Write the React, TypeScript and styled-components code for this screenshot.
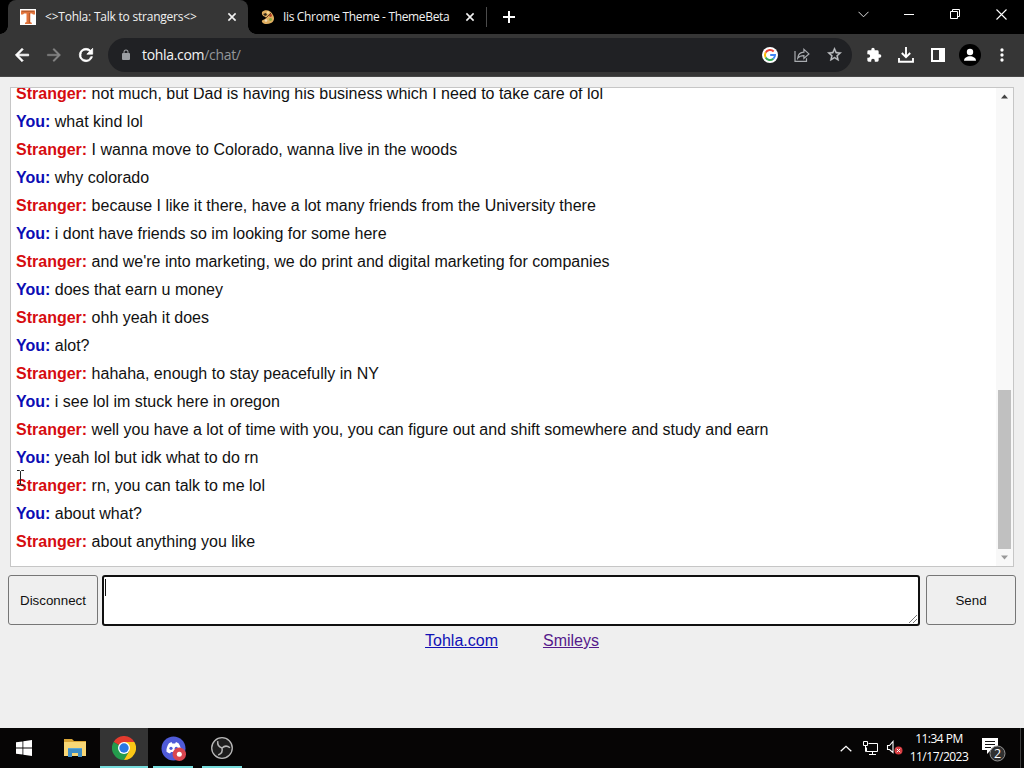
import React from "react";
import styled, { createGlobalStyle } from "styled-components";

const GlobalStyle = createGlobalStyle`
  * { box-sizing: border-box; }
  html, body { margin: 0; padding: 0; overflow: hidden; }
  body { font-family: "Liberation Sans", Arial, sans-serif; }
  svg { display: block; flex: none; }
`;

const uiFont = `"Open Sans", "Noto Sans", sans-serif`;

const Desktop = styled.div`
  position: relative;
  width: 1024px;
  height: 768px;
  display: flex;
  flex-direction: column;
  background: #efefef;
  overflow: hidden;
`;

const TabStrip = styled.header`
  display: flex;
  height: 34px;
  flex: none;
  padding-left: 8px;
  background: #000;
  color: #fff;
`;

const Tab = styled.div<{ $active?: boolean }>`
  position: relative;
  display: flex;
  align-items: center;
  width: ${(p) => (p.$active ? 240 : 238)}px;
  height: 34px;
  padding-left: 12px;
  border-radius: 8px 8px 0 0;
  background: ${(p) => (p.$active ? "#363636" : "transparent")};
  &::before, &::after {
    content: "";
    display: ${(p) => (p.$active ? "block" : "none")};
    position: absolute;
    bottom: 0;
    width: 8px;
    height: 8px;
  }
  &::before { left: -8px; background: radial-gradient(circle at 0 0, transparent 7.5px, #363636 8px); }
  &::after { right: -8px; background: radial-gradient(circle at 100% 0, transparent 7.5px, #363636 8px); }
`;

const TabTitle = styled.span<{ $gap: number; $spacing: number }>`
  flex: 1;
  margin-left: ${(p) => p.$gap}px;
  font: 12px/16px ${uiFont};
  letter-spacing: ${(p) => p.$spacing}px;
  white-space: nowrap;
  color: #f1f1f1;
`;

const TabClose = styled.span`
  display: flex;
  justify-content: center;
  width: 16px;
  margin-right: 8px;
`;

const TabDivider = styled.span`
  width: 1px;
  height: 20px;
  margin-top: 7px;
  background: #4b4b4b;
`;

const NewTab = styled.span`
  display: flex;
  align-items: center;
  justify-content: center;
  width: 28px;
  height: 34px;
  margin-left: 8px;
`;

const WindowControls = styled.div`
  display: flex;
  height: 28px;
  margin-left: auto;
`;

const WindowButton = styled.span`
  display: flex;
  align-items: center;
  justify-content: center;
  width: 46px;
`;

const Toolbar = styled.nav`
  display: flex;
  align-items: center;
  flex: none;
  height: 43px;
  padding: 0 6px 1px;
  background: #363636;
  border-bottom: 1px solid #474747;
`;

const ToolCell = styled.span`
  display: flex;
  align-items: center;
  justify-content: center;
  width: 32px;
  height: 32px;
  flex: none;
`;

const AddressBar = styled.div`
  display: flex;
  align-items: center;
  flex: 1;
  height: 34px;
  margin: 0 6px;
  padding: 0 2px 0 12px;
  border-radius: 17px;
  background: #202124;
`;

const Url = styled.span`
  flex: 1;
  margin-left: 10px;
  font: 14px/20px ${uiFont};
  letter-spacing: -0.32px;
  color: #f4f4f4;
`;

const UrlPath = styled.span`
  color: #93969a;
`;

const Page = styled.main`
  display: flex;
  flex-direction: column;
  flex: 1;
  min-height: 0;
  padding-top: 10px;
  background: #efefef;
`;

const ChatLog = styled.section`
  display: flex;
  height: 480px;
  flex: none;
  margin: 0 10px;
  border: 1px solid #c6c6c6;
  background: #fff;
  overflow: hidden;
`;

const Messages = styled.div`
  flex: 1;
  margin-top: -8px;
  padding-left: 5px;
`;

const Message = styled.p`
  margin: 0;
  height: 28px;
  font-size: 16px;
  line-height: 28px;
  color: #111;
  white-space: nowrap;
`;

const Speaker = styled.b<{ $you: boolean }>`
  color: ${(p) => (p.$you ? "#0c0cb4" : "#d60c10")};
`;

const Scrollbar = styled.div`
  display: flex;
  flex-direction: column;
  justify-content: space-between;
  align-items: center;
  width: 17px;
  padding: 6px 0 6px;
  background: #f8f8f8;
`;

const Thumb = styled.div`
  width: 13px;
  height: 159px;
  margin-top: auto;
  margin-bottom: 6px;
  background: #c0c0c0;
`;

const Composer = styled.form`
  display: flex;
  align-items: flex-start;
  height: 51px;
  margin: 8px 8px 0;
`;

const ChatButton = styled.button`
  width: 90px;
  height: 50px;
  padding: 0;
  border: 1px solid #767676;
  border-radius: 3px;
  background: #efefef;
  color: #101010;
  font: 13.333px "Liberation Sans", Arial, sans-serif;
`;

const MessageInput = styled.div`
  display: flex;
  align-items: flex-start;
  justify-content: space-between;
  flex: 1;
  height: 51px;
  margin: 0 6px 0 4px;
  border: 2px solid #101010;
  border-radius: 3px;
  background: #fff;
`;

const Caret = styled.span`
  width: 1px;
  height: 17px;
  margin: 2px 0 0 1px;
  background: #111;
`;

const ResizeGrip = styled.svg`
  align-self: flex-end;
`;

const FooterLinks = styled.footer`
  display: flex;
  justify-content: center;
  gap: 45px;
  margin-top: 5px;
  font-size: 16px;
  line-height: 20px;
`;

const FooterLink = styled.a<{ $visited?: boolean }>`
  color: ${(p) => (p.$visited ? "#551a8b" : "#1111b5")};
  text-decoration: underline;
`;

const Taskbar = styled.footer`
  display: flex;
  flex: none;
  height: 40px;
  background: #060505;
  color: #fff;
`;

const TaskItem = styled.span<{ $active?: boolean; $line?: number; $first?: boolean }>`
  display: flex;
  flex-direction: column;
  align-items: center;
  justify-content: center;
  width: 48px;
  height: 40px;
  margin-right: ${(p) => (p.$first ? 3 : 1)}px;
  background: linear-gradient(#76dcdc, #76dcdc) bottom center / ${(p) => p.$line || 0}px 2px no-repeat,
    ${(p) => (p.$active ? "#343434" : "transparent")};
`;

const Tray = styled.div`
  display: flex;
  align-items: center;
  margin-left: auto;
`;

const TrayCell = styled.span`
  display: flex;
  align-items: center;
  justify-content: center;
  width: 24px;
`;

const Clock = styled.div`
  width: 66px;
  text-align: center;
  font: 12px/18px ${uiFont};
  letter-spacing: -0.5px;
  white-space: nowrap;
`;

const Notifications = styled.span`
  width: 24px;
  margin: 3px 0 0 10px;
`;

const ShowDesktop = styled.span`
  width: 4px;
  height: 40px;
  margin-left: 14px;
  border-left: 1px solid #3d3d3d;
`;

const Pointer = styled.svg`
  position: absolute;
  left: 16px;
  top: 469px;
`;

const CloseIcon = () => (
  <svg width="10" height="10" viewBox="0 0 10 10" stroke="#f1f1f1" strokeWidth="1.6">
    <path d="M1.4 1.4 8.6 8.6M8.6 1.4 1.4 8.6" />
  </svg>
);

const MaterialIcon = ({ d, color = "#fff", size = 20, bold = 0 }: { d: string; color?: string; size?: number; bold?: number }) => (
  <svg width={size} height={size} viewBox="0 0 24 24" fill={color} stroke={color} strokeWidth={bold}>
    <path d={d} />
  </svg>
);

const TohlaIcon = () => (
  <svg width="16" height="16" viewBox="0 0 16 16">
    <rect width="16" height="16" fill="#fff" />
    <path d="M1 1.5h14v4h-2L12 4.5H10.3v8.5l1.5.7V15H5v-1.3l1.5-.7V4.5H4L3 5.5H1z" fill="#e2743c" />
    <path d="M2 2.3h12M9.4 4v10" stroke="#a9552a" strokeWidth=".9" />
  </svg>
);

const PaletteIcon = () => (
  <svg width="16" height="16" viewBox="0 0 16 16">
    <path d="M2 3C5 0 11 1 13 6c2 3 1 7-2 8-4 2-8 1-9-1-1-3 4-2 4-4S1 8 2 3z" fill="#dfae60" />
    <path d="m3 5 3-1 1 2-2 1" fill="#2d2419" />
    <circle cx="8" cy="3.5" r="1.3" fill="#f6d798" />
    <circle cx="10.5" cy="6.5" r="1.4" fill="#b64227" />
    <circle cx="10.5" cy="10.5" r="1.4" fill="#86aa3c" />
    <circle cx="6" cy="11.5" r="1.3" fill="#f3e1ba" />
    <path d="m5 10 6-6" stroke="#654025" />
  </svg>
);

const GoogleIcon = () => (
  <svg width="16" height="16" viewBox="0 0 16 16">
    <circle cx="8" cy="8" r="8" fill="#fff" />
    <g fill="none" strokeWidth="2">
      <path d="M11.7 4.5A5 5 0 0 0 3.6 5.6" stroke="#ea4335" />
      <path d="M3.6 5.6a5 5 0 0 0 0 4.8" stroke="#fbbc05" />
      <path d="M3.6 10.4a5 5 0 0 0 7.7 1.3" stroke="#34a853" />
      <path d="M11.3 11.7A5 5 0 0 0 13 8H8.2" stroke="#4285f4" />
    </g>
  </svg>
);

const ShareIcon = () => (
  <svg width="16" height="16" viewBox="0 0 16 16" fill="none" stroke="#a9acb0" strokeWidth="1.2">
    <path d="M1 4v10.3h11.5v-3M3.7 11.2c.3-3.8 2.5-5.9 6.2-6.1V2.3l5 4.6-5 4.5V8.6c-2.8 0-4.8.8-6.2 2.6z" />
  </svg>
);

const ProfileIcon = () => (
  <svg width="22" height="22" viewBox="0 0 22 22">
    <circle cx="11" cy="11" r="11" fill="#000" />
    <circle cx="11" cy="8" r="3.2" fill="#fff" />
    <path d="M5 16.7c0-2.7 3-4.4 6-4.4s6 1.7 6 4.4z" fill="#fff" />
  </svg>
);

const DownloadIcon = () => (
  <svg width="16" height="16" viewBox="0 0 16 16" fill="none" stroke="#fff" strokeWidth="1.9">
    <path d="M8 0v9.8M3.8 6 8 10.2 12.2 6M1 11v3.8h14V11" />
  </svg>
);

const SidePanelIcon = () => (
  <svg width="14" height="14" viewBox="0 0 14 14">
    <path d="M0 0h14v14H0zM2 2v10h6V2z" fill="#fff" fillRule="evenodd" />
  </svg>
);

const WindowsIcon = () => (
  <svg width="16" height="16" viewBox="0 0 16 16" fill="#fff">
    <path d="M0 2.3 6.5 1.4v6.2H0zM7.3 1.3 16 0v7.6H7.3zM0 8.4h6.5v6.2L0 13.7zM7.3 8.4H16V16l-8.7-1.3z" />
  </svg>
);

const FolderIcon = () => (
  <svg width="22" height="18" viewBox="0 0 22 18">
    <path d="M0 0h8l2 2h12v15H0z" fill="#d9a536" />
    <path d="M0 3h22v14H0z" fill="#f8d775" />
    <path d="M4 18V9h14v9h-4v-4H8v4z" fill="#3f8ec4" />
    <path d="M4 9.5h14" stroke="#5aa6d6" />
  </svg>
);

const ChromeIcon = () => (
  <svg width="24" height="24" viewBox="0 0 24 24">
    <path d="M12 12 1.6 6A12 12 0 0 1 22.4 6z" fill="#e33b2e" />
    <path d="M12 12 1.6 6A12 12 0 0 0 12 24l5.2-9z" fill="#249b4c" />
    <path d="M12 6h10.4A12 12 0 0 1 12 24l5.2-9z" fill="#fbc716" />
    <circle cx="12" cy="12" r="6" fill="#fff" />
    <circle cx="12" cy="12" r="4.7" fill="#2878e4" />
  </svg>
);

const DiscordIcon = () => (
  <svg width="25" height="25" viewBox="0 0 25 25">
    <circle cx="12.5" cy="12.5" r="12" fill="#4f5bd8" />
    <path d="M8 7.2 10.5 6l.8 1.4h2.8L15 6l2.5 1.2c1.8 2.6 2.8 5.6 2.5 8.5-1 .9-2.2 1.4-3.5 1.7l-1-1.5H10l-1 1.5c-1.3-.3-2.5-.8-3.5-1.7C5.2 12.8 6.2 9.8 8 7.2z" fill="#fff" />
    <circle cx="10" cy="12.3" r="1.6" fill="#4f5bd8" />
    <circle cx="15.3" cy="12.3" r="1.6" fill="#4f5bd8" />
    <circle cx="18.3" cy="18.3" r="6.7" fill="#d94650" />
    <circle cx="18.3" cy="18.3" r="2.5" fill="#fff" />
  </svg>
);

const ObsIcon = () => (
  <svg width="22" height="22" viewBox="0 0 22 22" fill="none">
    <circle cx="11" cy="11" r="10.3" fill="#1d1d1d" stroke="#b8b8b8" strokeWidth="1.3" />
    <g stroke="#b7b7b7" strokeWidth="1.5">
      <path d="M6.8 4.2c-.6 3.8 1 5.9 4.2 6.8" />
      <path d="M6.8 4.2c-.6 3.8 1 5.9 4.2 6.8" transform="rotate(120 11 11)" />
      <path d="M6.8 4.2c-.6 3.8 1 5.9 4.2 6.8" transform="rotate(240 11 11)" />
    </g>
  </svg>
);

const NetworkIcon = () => (
  <svg width="17" height="15" viewBox="0 0 17 15" fill="none" stroke="#fff" strokeWidth="1">
    <path d="M6.5 2.5h9v8h-11V6.5M10.5 10.5v3M7 13.5h7M1.5.5h4v4h-4zM3.5 4.5v6h1" />
  </svg>
);

const SpeakerIcon = () => (
  <svg width="17" height="16" viewBox="0 0 17 16">
    <path d="M1.5 5.5h2l3.5-4v11L3.5 9.5h-2z" fill="none" stroke="#fff" strokeWidth="1.1" />
    <circle cx="12.5" cy="10.5" r="4" fill="#d83c40" />
    <path d="m10.8 8.8 3.4 3.4m0-3.4-3.4 3.4" stroke="#fff" />
  </svg>
);

const NotificationIcon = () => (
  <svg width="24" height="24" viewBox="0 0 24 24">
    <path d="M0 0h16v12H9l-4 4v-4H0z" fill="#fff" />
    <path d="M3 3.5h10M3 6.5h10M3 9.5h6" stroke="#111" />
    <circle cx="15.5" cy="15.5" r="7.5" fill="#303030" stroke="#929292" />
    <text x="15.5" y="20" textAnchor="middle" fill="#fff" fontSize="12.5" fontFamily="Open Sans">2</text>
  </svg>
);

const paths = {
  back: "M20 11H7.83l5.59-5.59L12 4l-8 8 8 8 1.41-1.41L7.83 13H20v-2z",
  forward: "m12 4-1.41 1.41L16.17 11H4v2h12.17l-5.58 5.59L12 20l8-8z",
  reload: "M17.65 6.35A7.96 7.96 0 0 0 12 4a8 8 0 1 0 7.73 10h-2.08A6 6 0 1 1 12 6c1.66 0 3.14.69 4.22 1.78L13 11h7V4z",
  lock: "M18 8h-1V6A5 5 0 0 0 7 6v2H6a2 2 0 0 0-2 2v10a2 2 0 0 0 2 2h12a2 2 0 0 0 2-2V10a2 2 0 0 0-2-2zm-9 0V6a3 3 0 0 1 6 0v2z",
  star: "m22 9.24-7.19-.62L12 2 9.19 8.63 2 9.24l5.46 4.73L5.82 21 12 17.27 18.18 21l-1.63-7.03zM12 15.4l-3.76 2.27 1-4.28-3.32-2.88 4.38-.38L12 6.1l1.71 4.04 4.38.38-3.32 2.88 1 4.28z",
  puzzle: "M20.5 11H19V7a2 2 0 0 0-2-2h-4V3.5a2.5 2.5 0 0 0-5 0V5H4a2 2 0 0 0-2 2v3.8h1.5a2.7 2.7 0 0 1 0 5.4H2V20a2 2 0 0 0 2 2h3.8v-1.5a2.7 2.7 0 0 1 5.4 0V22H17a2 2 0 0 0 2-2v-4h1.5a2.5 2.5 0 0 0 0-5z",
  dots: "M12 8a2 2 0 1 0 0-4 2 2 0 0 0 0 4zm0 2a2 2 0 1 0 0 4 2 2 0 0 0 0-4zm0 6a2 2 0 1 0 0 4 2 2 0 0 0 0-4z",
};

const messages: [boolean, string][] = [
  [false, "not much, but Dad is having his business which I need to take care of lol"],
  [true, "what kind lol"],
  [false, "I wanna move to Colorado, wanna live in the woods"],
  [true, "why colorado"],
  [false, "because I like it there, have a lot many friends from the University there"],
  [true, "i dont have friends so im looking for some here"],
  [false, "and we're into marketing, we do print and digital marketing for companies"],
  [true, "does that earn u money"],
  [false, "ohh yeah it does"],
  [true, "alot?"],
  [false, "hahaha, enough to stay peacefully in NY"],
  [true, "i see lol im stuck here in oregon"],
  [false, "well you have a lot of time with you, you can figure out and shift somewhere and study and earn"],
  [true, "yeah lol but idk what to do rn"],
  [false, "rn, you can talk to me lol"],
  [true, "about what?"],
  [false, "about anything you like"],
];

export default function App() {
  return (
    <Desktop>
      <GlobalStyle />
      <TabStrip>
        <Tab $active>
          <TohlaIcon />
          <TabTitle $gap={9} $spacing={-0.22}>&lt;&gt;Tohla: Talk to strangers&lt;&gt;</TabTitle>
          <TabClose><CloseIcon /></TabClose>
        </Tab>
        <Tab>
          <PaletteIcon />
          <TabTitle $gap={7} $spacing={-0.34}>Iis Chrome Theme - ThemeBeta</TabTitle>
          <TabClose><CloseIcon /></TabClose>
        </Tab>
        <TabDivider />
        <NewTab>
          <svg width="12" height="12" viewBox="0 0 12 12" stroke="#fff" strokeWidth="2"><path d="M6 0v12M0 6h12" /></svg>
        </NewTab>
        <WindowControls>
          <WindowButton><svg width="11" height="7" viewBox="0 0 11 7" fill="none" stroke="#ddd"><path d="m.5.8 5 5 5-5" /></svg></WindowButton>
          <WindowButton><svg width="10" height="1"><rect width="10" height="1" fill="#fff" /></svg></WindowButton>
          <WindowButton><svg width="10" height="10" viewBox="0 0 10 10" fill="none" stroke="#fff"><path d="M.5 2.5h7v7h-7zM2.5 2.5v-2h7v7h-2" /></svg></WindowButton>
          <WindowButton><svg width="11" height="11" viewBox="0 0 11 11" stroke="#fff" strokeWidth="1.1"><path d="m.5.5 10 10m0-10-10 10" /></svg></WindowButton>
        </WindowControls>
      </TabStrip>
      <Toolbar>
        <ToolCell><MaterialIcon d={paths.back} bold={0.9} /></ToolCell>
        <ToolCell><MaterialIcon d={paths.forward} color="#858585" bold={0.4} /></ToolCell>
        <ToolCell><MaterialIcon d={paths.reload} bold={0.9} /></ToolCell>
        <AddressBar>
          <MaterialIcon d={paths.lock} size={12} color="#9b9ea2" />
          <Url>tohla.com<UrlPath>/chat/</UrlPath></Url>
          <ToolCell><GoogleIcon /></ToolCell>
          <ToolCell><ShareIcon /></ToolCell>
          <ToolCell><MaterialIcon d={paths.star} size={17} color="#c0c2c5" bold={0.5} /></ToolCell>
        </AddressBar>
        <ToolCell><MaterialIcon d={paths.puzzle} size={16} /></ToolCell>
        <ToolCell><DownloadIcon /></ToolCell>
        <ToolCell><SidePanelIcon /></ToolCell>
        <ToolCell><ProfileIcon /></ToolCell>
        <ToolCell><MaterialIcon d={paths.dots} size={20} /></ToolCell>
      </Toolbar>
      <Page>
        <ChatLog>
          <Messages>
            {messages.map(([you, text]) => (
              <Message key={text}>
                <Speaker $you={you}>{you ? "You:" : "Stranger:"}</Speaker> {text}
              </Message>
            ))}
          </Messages>
          <Scrollbar>
            <svg width="7" height="5" viewBox="0 0 7 5"><path d="m0 4.5 3.5-4 3.5 4z" fill="#444" /></svg>
            <Thumb />
            <svg width="7" height="5" viewBox="0 0 7 5"><path d="m0 .5 3.5 4 3.5-4z" fill="#999" /></svg>
          </Scrollbar>
        </ChatLog>
        <Composer>
          <ChatButton type="button">Disconnect</ChatButton>
          <MessageInput>
            <Caret />
            <ResizeGrip width="10" height="10" viewBox="0 0 10 10" stroke="#555" strokeWidth=".8">
              <path d="m1 9 8-8M5 9l4-4" />
            </ResizeGrip>
          </MessageInput>
          <ChatButton type="button">Send</ChatButton>
        </Composer>
        <FooterLinks>
          <FooterLink>Tohla.com</FooterLink>
          <FooterLink $visited>Smileys</FooterLink>
        </FooterLinks>
      </Page>
      <Taskbar>
        <TaskItem $first><WindowsIcon /></TaskItem>
        <TaskItem><FolderIcon /></TaskItem>
        <TaskItem $active $line={48}><ChromeIcon /></TaskItem>
        <TaskItem $line={40}><DiscordIcon /></TaskItem>
        <TaskItem $line={40}><ObsIcon /></TaskItem>
        <Tray>
          <TrayCell><svg width="12" height="7" viewBox="0 0 12 7" fill="none" stroke="#fff" strokeWidth="1.3"><path d="m.7 6.3 5.3-5 5.3 5" /></svg></TrayCell>
          <TrayCell><NetworkIcon /></TrayCell>
          <TrayCell><SpeakerIcon /></TrayCell>
          <Clock>11:34 PM<br />11/17/2023</Clock>
          <Notifications><NotificationIcon /></Notifications>
          <ShowDesktop />
        </Tray>
      </Taskbar>
      <Pointer width="9" height="18" viewBox="0 0 9 18" fill="none" stroke="#222">
        <path d="M1 1.5h2.5l1 1 1-1H8M4.5 2.5v13M1 16.5h2.5l1-1 1 1H8" />
      </Pointer>
    </Desktop>
  );
}
